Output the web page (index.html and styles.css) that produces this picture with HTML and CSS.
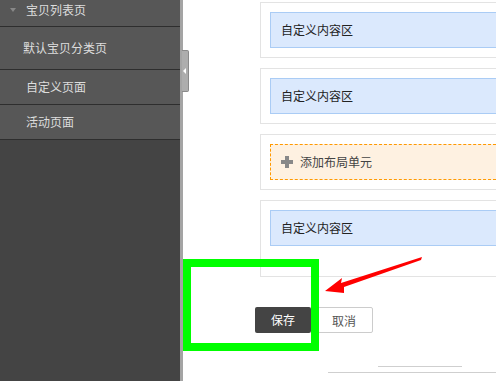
FILE: index.html
```html
<!DOCTYPE html>
<html>
<head>
<meta charset="utf-8">
<title>页面管理</title>
<link rel="stylesheet" href="styles.css">
</head>
<body>
<div class="page">
  <div class="side">
    <ul class="nav">
      <li class="nav-top"><span class="caret"></span>宝贝列表页</li>
      <li class="nav-cat">默认宝贝分类页</li>
      <li>自定义页面</li>
      <li>活动页面</li>
    </ul>
  </div>
  <div class="split"><span class="tab"><span class="tab-arrow"></span></span></div>
  <div class="main">
    <div class="card"><div class="cell">自定义内容区</div></div>
    <div class="card"><div class="cell">自定义内容区</div></div>
    <div class="card"><div class="cell add"><span class="plus"></span>添加布局单元</div></div>
    <div class="card last"><div class="cell">自定义内容区</div></div>
    <div class="actions">
      <span class="btn save">保存</span>
      <span class="btn cancel">取消</span>
    </div>
    <div class="rule short"></div>
    <div class="rule long"></div>
  </div>
</div>

<!-- annotation drawn over the screenshot -->
<div class="mark"></div>
<svg class="arrow" width="120" height="50" viewBox="0 0 120 50">
  <polygon points="0,41 17,28 16,33 97,7 96,10 19,37 19,43" fill="#f00"/>
</svg>
</body>
</html>
```

FILE: styles.css
```css
html, body { margin: 0; padding: 0; }
body { width: 496px; height: 381px; overflow: hidden; background: #fff;
  font: 12px "Noto Sans CJK SC", "Liberation Sans", sans-serif; position: relative; }

.page { display: flex; height: 381px; }

/* left menu */
.side { width: 180px; flex: none; background: #444; }
.nav { list-style: none; margin: 0; padding: 0; }
.nav li { height: 34px; line-height: 34px; padding-left: 26px; color: #ddd;
  background: #575757; border-bottom: 1px solid #2e2e2e; white-space: nowrap; }
.nav .nav-top { height: 26px; line-height: 20px; position: relative; }
.nav .nav-cat { height: 42px; line-height: 42px; padding-left: 23px; }
.caret { position: absolute; left: 10px; top: 8px; width: 0; height: 0;
  border: 3px solid transparent; border-top: 4px solid #888; border-bottom: 0; }

.split { width: 3px; flex: none; background: #a4a4a4; position: relative; }
.tab { position: absolute; left: 2px; top: 50px; width: 6px; height: 40px;
  background: #adadad; border: 1px solid #8a8a8a; border-left: 0; border-radius: 0 2px 2px 0; }
.tab-arrow { position: absolute; left: 1px; top: 17px; width: 0; height: 0;
  border: 3px solid transparent; border-right: 3px solid #fff; border-left: 0; }

/* layout units */
.main { flex: 1; padding: 2px 0 0 77px; overflow: hidden; }
.card { border: 1px solid #e3e3e3; border-right: 0; padding: 9px 0 9px 9px;
  margin-bottom: 10px; }
.card.last { padding-bottom: 30px; margin-bottom: 0; }
.cell { height: 34px; line-height: 34px; padding-left: 10px; color: #222;
  background: #dbe9fd; border: 1px solid #aaccf5; border-right: 0; }
.cell.add { background: #fef1e1; border: 1px dashed #f90; border-right: 0;
  color: #444; display: flex; align-items: center; }
.plus { width: 12px; height: 12px; margin-right: 7px; position: relative; }
.plus::before, .plus::after { content: ""; position: absolute; background: #888; }
.plus::before { left: 4px; top: 0; width: 4px; height: 12px; }
.plus::after { left: 0; top: 4px; width: 12px; height: 4px; }

.actions { display: flex; gap: 4px; margin: 30px 0 0 -5px; }
.btn { height: 26px; line-height: 26px; text-align: center; border-radius: 2px;
  box-sizing: border-box; }
.save { width: 56px; background: #444; color: #fff; }
.cancel { width: 58px; border: 1px solid #ccc; color: #555; background: #fff; }

.rule { height: 1px; background: #cfcfcf; }
.rule.short { width: 84px; margin: 33px 0 0 118px; }
.rule.long { margin: 5px 0 0 68px; }

.mark { position: absolute; left: 183px; top: 259px; width: 120px; height: 76px;
  border: 8px solid #00ff00; }
.arrow { position: absolute; left: 325px; top: 250px; }
```
